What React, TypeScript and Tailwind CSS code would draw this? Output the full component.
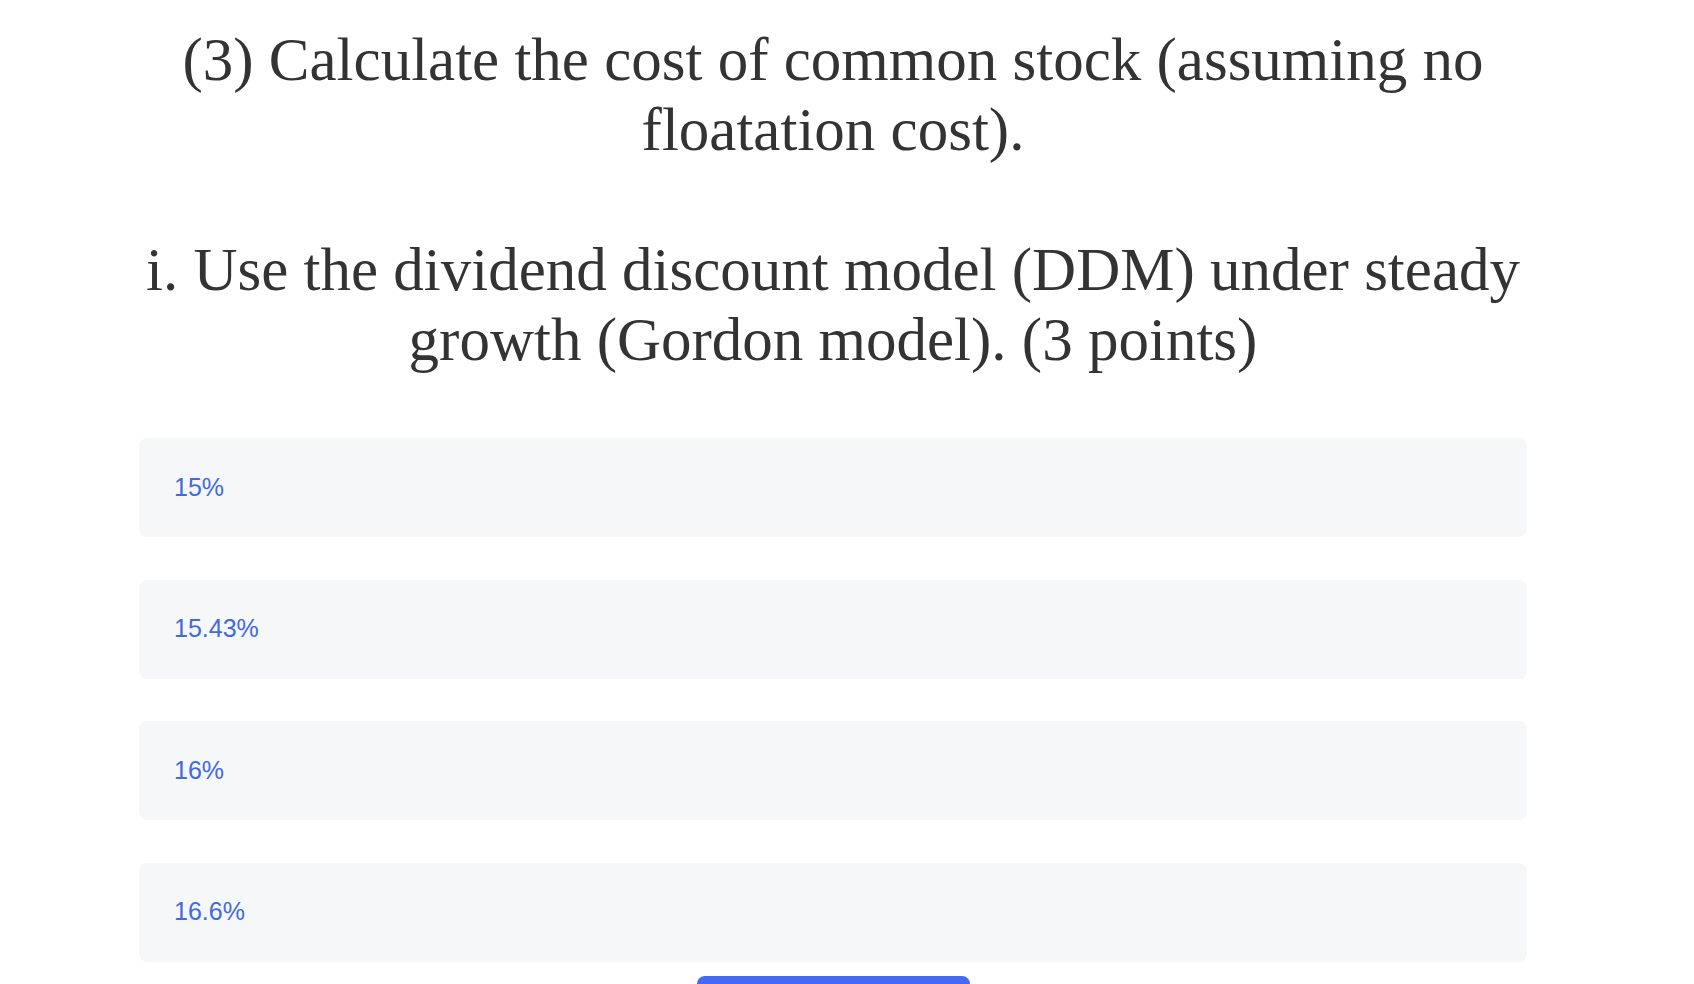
const options = ["15%", "15.43%", "16%", "16.6%"];

export default function App() {
  return (
    <main className="min-h-screen bg-white">
      <div className="pl-[139px]">
        <div className="w-[1388px]">
          {/* Question */}
          <h1 className="pt-[25px] text-center font-['Liberation_Serif',serif] text-[61px] font-normal leading-[70px] text-[#333333]">
            (3) Calculate the cost of common stock (assuming no
            <br />
            floatation cost).
            <br />
            <br />
            i. Use the dividend discount model (DDM) under steady
            <br />
            growth (Gordon model). (3 points)
          </h1>

          {/* Answer choices */}
          <div className="mt-[63px] flex flex-col gap-[42.5px]">
            {options.map((opt) => (
              <button
                key={opt}
                className="flex h-[99px] items-center rounded-lg bg-[#f6f7f9] pl-[35px] pr-9 text-left font-['Liberation_Sans',sans-serif] text-[25px] text-[#4169e1]"
              >
                {opt}
              </button>
            ))}
          </div>

          <div className="mt-[14px] flex justify-center">
            <button className="h-[60px] w-[273px] rounded-lg bg-[#4469f2] font-['Liberation_Sans',sans-serif] text-[22px] font-semibold text-white">
              Submit
            </button>
          </div>
        </div>
      </div>
    </main>
  );
}
